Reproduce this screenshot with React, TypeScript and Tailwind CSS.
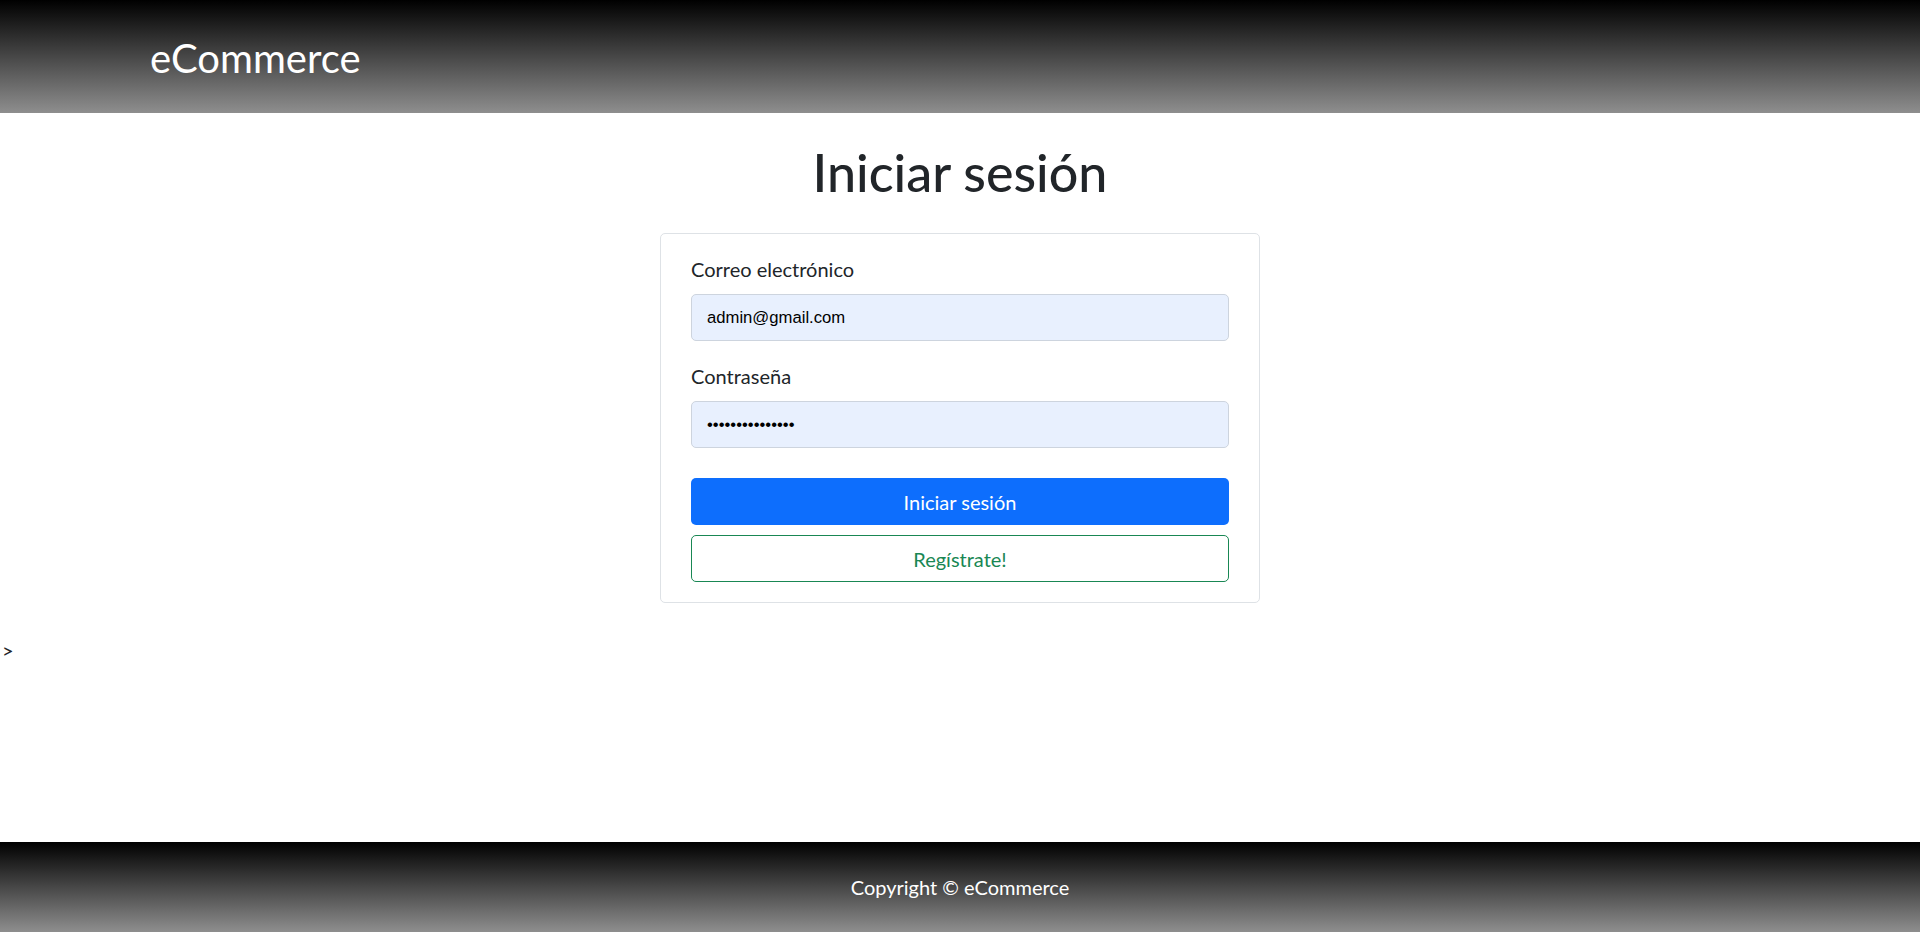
import React from 'react';

function Header() {
  return (
    <header className="h-[113px] bg-[linear-gradient(to_bottom,#000000,#8e8e8e)]">
      <div className="mx-auto flex h-full w-[1650px] items-center px-[15px] pt-[3px]">
        <a href="#" className="text-[40px] leading-[1.2] text-white">
          eCommerce
        </a>
      </div>
    </header>
  );
}

function LoginCard() {
  return (
    <div className="w-[600px] rounded-[5px] border border-[#dee2e6] bg-white px-[30px] pb-[20px] pt-[20px]">
      <form onSubmit={(e) => e.preventDefault()}>
        <div className="mb-[20px]">
          <label className="mb-[10px] block text-[20px] leading-[30px] text-[#212529]">Correo electrónico</label>
          <input
            type="email"
            readOnly
            defaultValue="admin@gmail.com"
            className="block h-[47px] w-full rounded-[5px] border border-[#cdd4de] bg-[#e8f0fe] px-[15px] font-['Liberation_Sans',Arial,sans-serif] text-[16.67px] text-black outline-none"
          />
        </div>
        <div className="mb-[30px]">
          <label className="mb-[10px] block text-[20px] leading-[30px] text-[#212529]">Contraseña</label>
          <input
            type="password"
            readOnly
            defaultValue="admin1234567890"
            className="block h-[47px] w-full rounded-[5px] border border-[#cdd4de] bg-[#e8f0fe] px-[15px] font-['Liberation_Sans',Arial,sans-serif] text-[16.67px] text-black outline-none"
          />
        </div>
        <div className="flex flex-col gap-[10px]">
          <button className="h-[47px] w-full rounded-[5px] bg-[#0d6efd] text-[20px] text-white">Iniciar sesión</button>
          <button className="h-[47px] w-full rounded-[5px] border border-[#198754] bg-white text-[20px] text-[#198754]">Regístrate!</button>
        </div>
      </form>
    </div>
  );
}

export default function App() {
  return (
    <div className="flex min-h-screen flex-col bg-white font-['Lato','Open_Sans',sans-serif] text-[#212529]">
      <Header />
      <main className="flex-1">
        <div className="flex flex-col items-center pt-[28px]">
          <h1 className="mb-[30px] text-[52px] font-medium leading-[1.2] text-[#212529]">Iniciar sesión</h1>
          <LoginCard />
        </div>
        <div className="mt-[32px] pl-[2px] text-[20px] leading-[30px]">&gt;</div>
      </main>
      <footer className="flex h-[90px] items-center justify-center bg-[linear-gradient(to_bottom,#000000,#8e8e8e)]">
        <p className="text-[20px] text-white">Copyright © eCommerce</p>
      </footer>
    </div>
  );
}
